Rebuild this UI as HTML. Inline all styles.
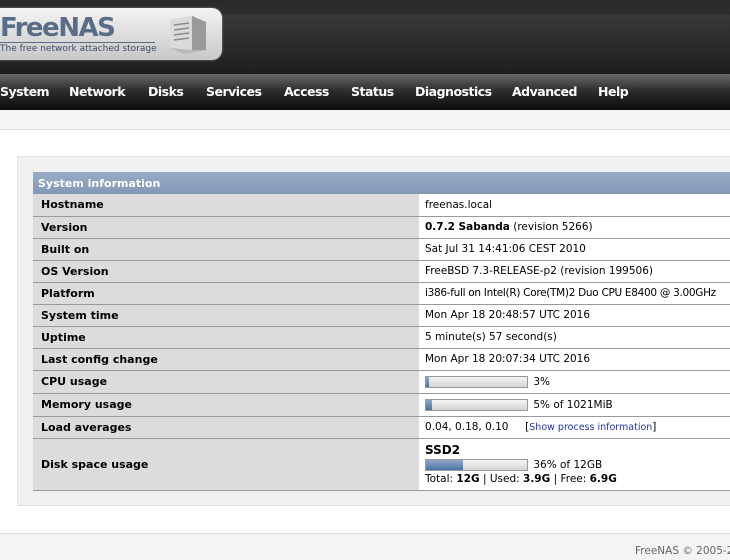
<!DOCTYPE html>
<html><head><meta charset="utf-8"><style>
*{margin:0;padding:0;box-sizing:border-box}
body{width:730px;height:560px;overflow:hidden;background:#fff;font-family:"DejaVu Sans","Liberation Sans",sans-serif;font-size:11px;color:#000;position:relative}
#hdr{position:absolute;left:0;top:0;width:730px;height:74px;background:linear-gradient(#2a2a2a 0,#2e2e2e 14px,#383838 16px,#1e1e1e 74px)}
#logo{position:absolute;left:-12px;top:8px;width:234px;height:52px;border-radius:10px;background:linear-gradient(#f4f4f4,#d9d9d9 60%,#c8c8c8);box-shadow:0 0 2px #888}
#logo .t{position:absolute;left:12px;top:7px;font:bold 26px "DejaVu Sans",sans-serif;color:#5a6d88;letter-spacing:-1.5px;line-height:26px}
#logo .s{position:absolute;left:12px;top:34px;font-size:9px;color:#3e4c62;border-top:1px solid #5a6d88;padding-top:1px;width:155px;white-space:nowrap}
#box{position:absolute}
#nav{position:absolute;left:0;top:74px;width:730px;height:36px;background:linear-gradient(#6a6a6a,#2e2e2e 45%,#0c0c0c)}
#nav span{position:absolute;top:10px;color:#fff;font-weight:bold;font-size:12.5px;font-family:"DejaVu Sans",sans-serif;letter-spacing:-0.5px}
#band{position:absolute;left:0;top:110px;width:730px;height:20px;background:#f5f5f5;border-bottom:1px solid #dcdcd6}
#cont{position:absolute;left:17px;top:156px;width:713px;height:350px;background:#f0f0f0;border-top:1px solid #e4e4e4;border-left:1px solid #e4e4e4;border-bottom:1px solid #e0e0e0}
table{position:absolute;left:33px;top:172px;width:697px;border-collapse:collapse;table-layout:fixed;white-space:nowrap}
th{height:22px;background:linear-gradient(#98abc6,#8398b6);color:#fff;text-align:left;padding-left:5px;font-size:11px;font-weight:bold}
td{height:22px;border-bottom:1px solid #999;padding-left:8px;vertical-align:middle;overflow:hidden}
td.l{background:#dcdcdc;font-weight:bold;font-size:11px}
td.v{background:#fff;padding-left:6px;font-size:10.5px}
.bar{display:inline-block;width:103px;height:12px;border:1px solid #999;background:linear-gradient(#f4f4f4,#d4d4d4);vertical-align:middle;position:relative;margin-right:2px}
.bar i{position:absolute;left:0;top:0;height:10px;background:linear-gradient(#8fa8c8,#4d73a3)}
a{color:#2233aa;text-decoration:none;font-size:9.5px}
#ft{position:absolute;left:0;top:533px;width:730px;height:27px;background:#f4f4f4;border-top:1px solid #ddd}
#ft span{position:absolute;left:635px;top:11px;color:#666;font-size:10.5px;white-space:nowrap}
</style></head><body>
<div id="hdr"><div id="logo"><div class="t">FreeNAS</div><div class="s">The free network attached storage</div>
<svg id="box" viewBox="0 0 40 40" style="left:180px;top:6px;width:40px;height:40px"><polygon points="2,6 24,2 38,8 38,36 16,40 2,34" fill="#b8b8b8"/><polygon points="2,6 24,2 24,36 2,34" fill="#dadada"/><polygon points="24,2 38,8 38,36 24,36" fill="#9a9a9a"/><g stroke="#8a8a8a" stroke-width="1.5"><line x1="6" y1="11" x2="21" y2="9"/><line x1="6" y1="16" x2="21" y2="14"/><line x1="6" y1="21" x2="21" y2="19"/><line x1="6" y1="26" x2="21" y2="24"/></g></svg>
</div></div>
<div id="nav"><span style="left:0">System</span><span style="left:69px">Network</span><span style="left:148px">Disks</span><span style="left:206px">Services</span><span style="left:284px">Access</span><span style="left:351px">Status</span><span style="left:415px">Diagnostics</span><span style="left:512px">Advanced</span><span style="left:598px">Help</span></div>
<div id="band"></div>
<div id="cont"></div>
<table>
<colgroup><col style="width:386px"><col style="width:311px"></colgroup>
<tr><th colspan="2">System information</th></tr>
<tr><td class="l">Hostname</td><td class="v">freenas.local</td></tr>
<tr><td class="l">Version</td><td class="v"><b>0.7.2 Sabanda</b> (revision 5266)</td></tr>
<tr><td class="l">Built on</td><td class="v">Sat Jul 31 14:41:06 CEST 2010</td></tr>
<tr><td class="l">OS Version</td><td class="v">FreeBSD 7.3-RELEASE-p2 (revision 199506)</td></tr>
<tr><td class="l">Platform</td><td class="v" style="letter-spacing:-0.3px">i386-full on Intel(R) Core(TM)2 Duo CPU E8400 @ 3.00GHz</td></tr>
<tr><td class="l">System time</td><td class="v">Mon Apr 18 20:48:57 UTC 2016</td></tr>
<tr><td class="l">Uptime</td><td class="v">5 minute(s) 57 second(s)</td></tr>
<tr><td class="l">Last config change</td><td class="v">Mon Apr 18 20:07:34 UTC 2016</td></tr>
<tr><td class="l" style="height:23px">CPU usage</td><td class="v"><span class="bar"><i style="width:3px"></i></span> 3%</td></tr>
<tr><td class="l" style="height:23px">Memory usage</td><td class="v"><span class="bar"><i style="width:6px"></i></span> 5% of 1021MiB</td></tr>
<tr><td class="l">Load averages</td><td class="v">0.04, 0.18, 0.10 &nbsp; &nbsp; [<a>Show process information</a>]</td></tr>
<tr><td class="l" style="height:52px">Disk space usage</td><td class="v" style="line-height:14px"><b style="font-size:12px">SSD2</b><br><span class="bar"><i style="width:37px"></i></span> 36% of 12GB<br>Total: <b>12G</b> | Used: <b>3.9G</b> | Free: <b>6.9G</b></td></tr>
</table>
<div id="ft"><span>FreeNAS © 2005-2011</span></div>
</body></html>
